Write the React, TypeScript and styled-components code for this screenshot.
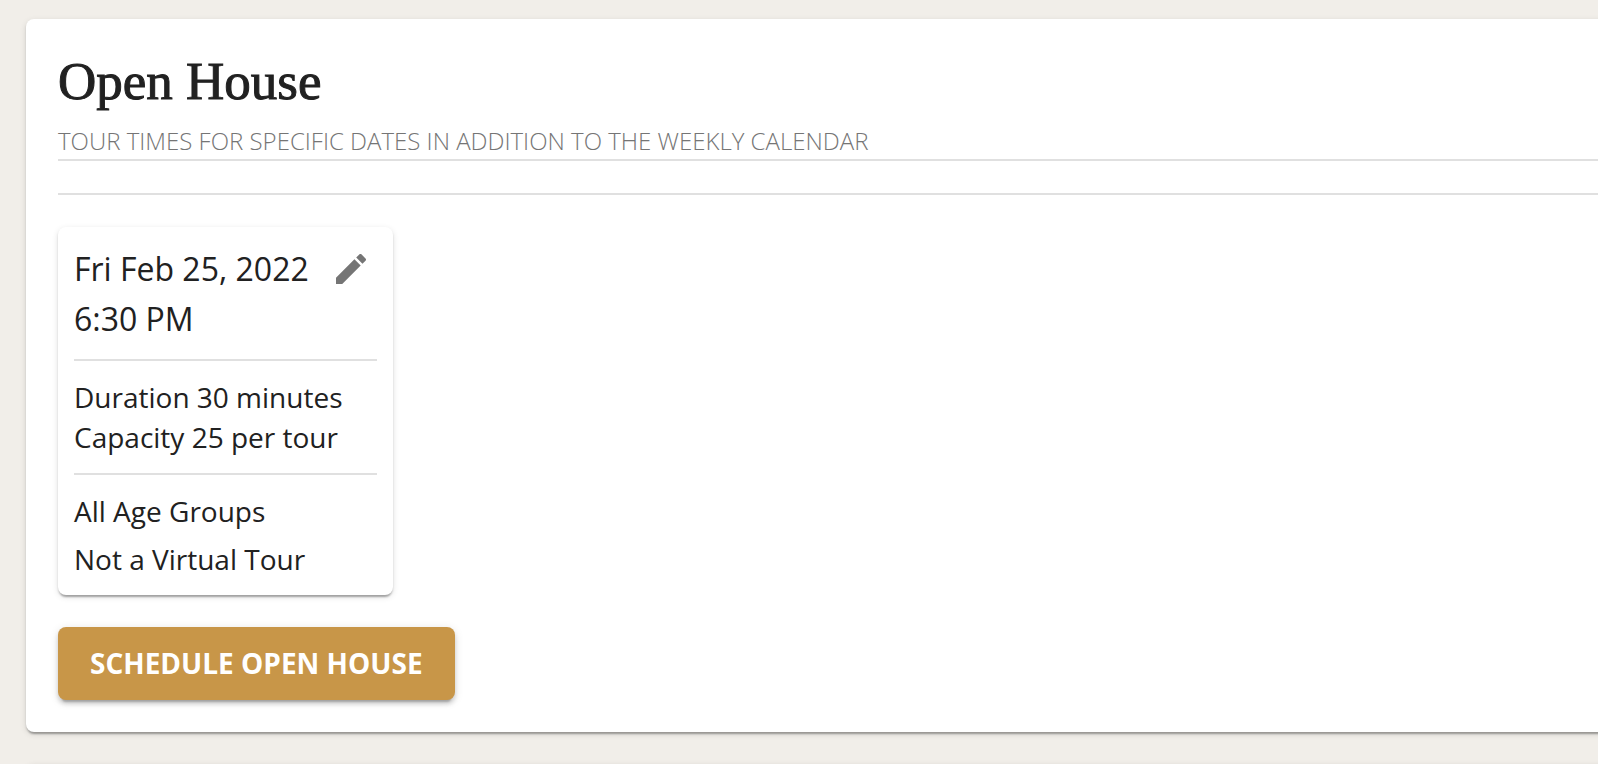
import React from "react";
import styled, { createGlobalStyle } from "styled-components";

const GlobalStyle = createGlobalStyle`
  * { box-sizing: border-box; }
  body {
    margin: 0;
    background: #f1eee9;
    color: #212121;
    font-family: "Open Sans", sans-serif;
  }
`;

const Page = styled.main`
  height: 100vh;
  overflow: hidden;
  padding: 19px 0 0 26px;
  display: flex;
  flex-direction: column;
  gap: 32px;
`;

const Paper = styled.section`
  flex: none;
  margin-right: -16px;
  padding: 32px 0 32px 32px;
  background: #fff;
  border-radius: 8px;
  box-shadow: 0 4px 2px -2px rgba(0, 0, 0, 0.2), 0 2px 2px 0 rgba(0, 0, 0, 0.14),
    0 2px 6px 0 rgba(0, 0, 0, 0.12);
`;

const Title = styled.h1`
  margin: 0 0 12px;
  font-family: "Liberation Serif", serif;
  font-size: 53px;
  font-weight: 400;
  line-height: 60px;
  -webkit-text-stroke: 1px currentColor;
`;

const Subtitle = styled.p`
  margin: 0;
  color: #757575;
  font-size: 24px;
  font-weight: 300;
  line-height: 36px;
  text-transform: uppercase;
`;

const Divider = styled.hr<{ $gap?: number }>`
  height: 2px;
  margin: ${({ $gap = 0 }) => $gap}px 0;
  border: 0;
  background: #e0e0e0;
`;

const TourCard = styled.article`
  width: 335px;
  margin-bottom: 32px;
  padding: 16px;
  border-radius: 8px;
  background: #fff;
  box-shadow: 0 4px 2px -2px rgba(0, 0, 0, 0.2), 0 2px 2px 0 rgba(0, 0, 0, 0.14),
    0 2px 6px 0 rgba(0, 0, 0, 0.12);
`;

const CardHeader = styled.header`
  display: flex;
  align-items: center;
  justify-content: space-between;
`;

const When = styled.p`
  margin: 0;
  font-size: 32px;
  line-height: 48px;
  white-space: nowrap;
`;

const IconButton = styled.button`
  display: flex;
  padding: 6px;
  border: 0;
  border-radius: 50%;
  background: none;
  color: #757575;
  cursor: pointer;
`;

const Details = styled.div<{ $gap?: number }>`
  display: flex;
  flex-direction: column;
  gap: ${({ $gap = 0 }) => $gap}px;
`;

const Detail = styled.p`
  margin: 0;
  font-size: 28px;
  line-height: 40px;
`;

const PrimaryButton = styled.button`
  padding: 12px 32px;
  border: 0;
  border-radius: 8px;
  background: #c89648;
  color: #fff;
  font-family: inherit;
  font-size: 28px;
  font-weight: 700;
  line-height: 49px;
  text-transform: uppercase;
  cursor: pointer;
  box-shadow: 0 6px 2px -4px rgba(0, 0, 0, 0.2), 0 4px 4px 0 rgba(0, 0, 0, 0.14),
    0 2px 10px 0 rgba(0, 0, 0, 0.12);
`;

const EditIcon = () => (
  <svg width="40" height="40" viewBox="0 0 24 24" fill="currentColor" aria-hidden="true">
    <path d="M3 17.25V21h3.75L17.81 9.94l-3.75-3.75L3 17.25zM20.71 7.04c.39-.39.39-1.02 0-1.41l-2.34-2.34c-.39-.39-1.02-.39-1.41 0l-1.83 1.83 3.75 3.75 1.83-1.83z" />
  </svg>
);

export default function App() {
  return (
    <>
      <GlobalStyle />
      <Page>
        <Paper>
          <Title>Open House</Title>
          <Subtitle>Tour times for specific dates in addition to the weekly calendar</Subtitle>
          <Divider />
          <Divider $gap={32} />
          <TourCard>
            <CardHeader>
              <When>Fri Feb 25, 2022</When>
              <IconButton type="button" aria-label="Edit open house">
                <EditIcon />
              </IconButton>
            </CardHeader>
            <When>6:30 PM</When>
            <Divider $gap={16} />
            <Details>
              <Detail>Duration 30 minutes</Detail>
              <Detail>Capacity 25 per tour</Detail>
            </Details>
            <Divider $gap={16} />
            <Details $gap={8}>
              <Detail>All Age Groups</Detail>
              <Detail>Not a Virtual Tour</Detail>
            </Details>
          </TourCard>
          <PrimaryButton type="button">Schedule Open House</PrimaryButton>
        </Paper>
        <Paper />
      </Page>
    </>
  );
}
